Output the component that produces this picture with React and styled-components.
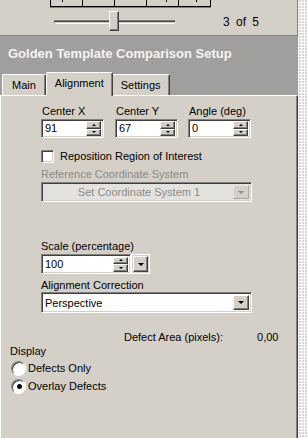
import React from "react";
import styled, { createGlobalStyle, css } from "styled-components";

const GlobalStyle = createGlobalStyle`
  html, body {
    margin: 0;
    padding: 0;
    width: 308px;
    height: 438px;
    overflow: hidden;
    background: #d4d0c8;
  }
  body {
    font-family: "Liberation Sans", Arial, sans-serif;
    font-size: 11px;
    color: #000;
  }
`;

const sunken = css`
  border-style: solid;
  border-width: 1px;
  border-color: #808080 #fff #fff #808080;
  box-shadow: inset 1px 1px 0 #404040, inset -1px -1px 0 #d4d0c8;
`;

const raised = css`
  background: #d4d0c8;
  border-style: solid;
  border-width: 1px;
  border-color: #fff #404040 #404040 #fff;
  box-shadow: inset -1px -1px 0 #808080;
`;

const Screen = styled.div`
  display: flex;
  width: 308px;
  height: 438px;
`;

const Main = styled.div`
  width: 298px;
  display: flex;
  flex-direction: column;
`;

const Dither = styled.div`
  flex: 1;
  border-left: 1px solid #f4f4f4;
  background-color: #fff;
  background-image: conic-gradient(
    from 90deg at 2px 2px,
    #fff 0 50%,
    #d8d6d2 0 75%,
    #fff 0
  );
  background-size: 3px 3px;
`;

const Top = styled.div`
  height: 35px;
  border-right: 1px solid #808080;
  border-bottom: 1px solid #808080;
  display: flex;
  flex-direction: column;
`;

const Strip = styled.div`
  display: flex;
  margin-left: 50px;
  height: 7px;
  border-bottom: 1px solid #808080;
  width: 161px;
`;

const StripCell = styled.div`
  width: 32px;
  border-left: 1px solid #000;
  border-right: ${(p) => (p.last ? "1px solid #000" : "none")};
  border-bottom: 1px solid #000;
  position: relative;
  &::after {
    content: "";
    display: ${(p) => (p.tick ? "block" : "none")};
    position: absolute;
    top: 0;
    left: ${(p) => p.tick}px;
    width: 1px;
    height: 2px;
    background: #000;
  }
`;

const SliderRow = styled.div`
  display: flex;
  align-items: center;
  height: 20px;
  margin-top: 4px;
`;

const Track = styled.div`
  margin-left: 54px;
  width: 120px;
  height: 2px;
  border-top: 1px solid #808080;
  border-bottom: 1px solid #fff;
  border-left: 1px solid #808080;
  box-shadow: inset 0 1px 0 #404040;
  position: relative;
`;

const Thumb = styled.div`
  ${raised};
  position: absolute;
  left: 54px;
  top: -10px;
  width: 8px;
  height: 18px;
`;

const Counter = styled.div`
  margin-left: 48px;
  font-size: 12px;
  word-spacing: 3px;
`;

const Header = styled.div`
  background: #a09f9d;
  height: 59px;
  display: flex;
  flex-direction: column;
  justify-content: space-between;
`;

const Title = styled.div`
  color: #f4f4f4;
  font-weight: bold;
  font-size: 13px;
  padding: 10px 0 0 8px;
`;

const Tabs = styled.div`
  display: flex;
  align-items: flex-end;
  padding-left: 2px;
  height: 24px;
`;

const Tab = styled.div`
  background: #d4d0c8;
  border-style: solid;
  border-width: 1px 1px 0 1px;
  border-color: #fff #404040 #404040 #fff;
  border-radius: 2px 2px 0 0;
  box-shadow: inset -1px 0 0 #808080;
  height: ${(p) => (p.active ? "24px" : "21px")};
  padding: 0 ${(p) => p.pad}px;
  margin: 0 ${(p) => (p.active ? "-1px" : "0")} ${(p) => (p.active ? "-1px" : "0")} 0;
  position: relative;
  z-index: ${(p) => (p.active ? 2 : 1)};
  display: flex;
  align-items: ${(p) => (p.active ? "flex-start" : "center")};
  padding-top: ${(p) => (p.active ? "4px" : "0")};
  box-sizing: border-box;
  color: #000;
`;

const Panel = styled.div`
  flex: 1;
  border-top: 1px solid #fff;
  border-left: 1px solid #fff;
  border-right: 1px solid #404040;
  box-shadow: inset -1px 0 0 #808080;
  display: flex;
  flex-direction: column;
`;

const Form = styled.div`
  padding-left: 40px;
  display: flex;
  flex-direction: column;
`;

const Label = styled.div`
  height: 14px;
  line-height: 14px;
  margin-top: ${(p) => p.mt || 0}px;
  padding-left: ${(p) => p.pl || 0}px;
  color: ${(p) => (p.disabled ? "#8d8a85" : "#000")};
  white-space: nowrap;
`;

const FieldRow = styled.div`
  display: flex;
  margin-top: 8px;
`;

const FieldGroup = styled.div`
  display: flex;
  flex-direction: column;
  width: ${(p) => p.w}px;
  gap: 1px;
  margin-right: ${(p) => p.mr || 0}px;
`;

const SpinBox = styled.div`
  ${sunken};
  background: #fff;
  width: ${(p) => p.w}px;
  height: ${(p) => p.h || 19}px;
  box-sizing: border-box;
  display: flex;
  align-items: center;
  padding: 2px;
`;

const SpinText = styled.div`
  flex: 1;
  padding-left: 1px;
  line-height: 15px;
`;

const SpinButtons = styled.div`
  display: flex;
  flex-direction: column;
  width: 15px;
  height: 15px;
`;

const SpinButton = styled.div`
  ${raised};
  flex: 1;
  box-sizing: border-box;
  display: flex;
  align-items: center;
  justify-content: center;
`;

const Arrow = styled.div`
  width: 0;
  height: 0;
  border-left: ${(p) => p.size}px solid transparent;
  border-right: ${(p) => p.size}px solid transparent;
  ${(p) =>
    p.up
      ? `border-bottom: ${p.size}px solid ${p.color || "#000"};`
      : `border-top: ${p.size}px solid ${p.color || "#000"};`}
`;

const Spin = ({ value, w, h }) => (
  <SpinBox w={w} h={h}>
    <SpinText>{value}</SpinText>
    <SpinButtons>
      <SpinButton>
        <Arrow up size={2} />
      </SpinButton>
      <SpinButton>
        <Arrow size={2} />
      </SpinButton>
    </SpinButtons>
  </SpinBox>
);

const CheckRow = styled.div`
  display: flex;
  align-items: center;
  gap: 6px;
  height: 14px;
  margin-top: 11px;
`;

const CheckBox = styled.div`
  ${sunken};
  background: #fff;
  width: 13px;
  height: 13px;
  box-sizing: border-box;
`;

const Combo = styled.div`
  ${sunken};
  background: ${(p) => (p.disabled ? "#e4e2de" : "#fff")};
  width: 211px;
  height: ${(p) => p.h || 20}px;
  box-sizing: border-box;
  display: flex;
  align-items: center;
  padding: 2px;
  margin-top: ${(p) => p.mt || 0}px;
  color: ${(p) => (p.disabled ? "#8d8a85" : "#000")};
`;

const ComboText = styled.div`
  flex: 1;
  padding-left: 1px;
  text-align: ${(p) => (p.center ? "center" : "left")};
`;

const DropButton = styled.div`
  ${raised};
  width: 16px;
  height: 100%;
  box-sizing: border-box;
  display: flex;
  align-items: center;
  justify-content: center;
  ${(p) =>
    p.disabled &&
    css`
      border-color: #e8e6e2 #a8a6a2 #a8a6a2 #e8e6e2;
      box-shadow: none;
      background: #d4d0c8;
    `}
`;

const ScaleRow = styled.div`
  display: flex;
  align-items: center;
  margin-top: 1px;
  height: 20px;
`;

const SideDrop = styled.div`
  border: 1px solid #fff;
  width: 19px;
  height: 20px;
  box-sizing: border-box;
  padding: 1px;
  display: flex;
`;

const SideDropInner = styled.div`
  ${raised};
  flex: 1;
  display: flex;
  align-items: center;
  justify-content: center;
`;

const DefectRow = styled.div`
  display: flex;
  margin-top: 17px;
  padding-left: 123px;
  height: 14px;
  line-height: 14px;
`;

const DefectValue = styled.div`
  margin-left: 34px;
`;

const Display = styled.div`
  padding-left: 9px;
  display: flex;
  flex-direction: column;
`;

const RadioRow = styled.div`
  display: flex;
  align-items: center;
  gap: 2px;
  height: 18px;
  margin-top: ${(p) => p.mt || 0}px;
`;

const RadioCircle = styled.div`
  width: 13px;
  height: 13px;
  margin-left: 1px;
  border-radius: 50%;
  background: #fff;
  border: 1px solid;
  border-color: #808080 #fff #fff #808080;
  box-shadow: inset 1px 1px 0 #404040;
  display: flex;
  align-items: center;
  justify-content: center;
  &::after {
    content: "";
    display: ${(p) => (p.checked ? "block" : "none")};
    width: 5px;
    height: 5px;
    border-radius: 50%;
    background: #000;
    margin: 1px 0 0 1px;
  }
`;

const Radio = ({ checked, label, mt }) => (
  <RadioRow mt={mt}>
    <RadioCircle checked={checked} />
    <span>{label}</span>
  </RadioRow>
);

export default function App() {
  return (
    <>
      <GlobalStyle />
      <Screen>
        <Main>
          <Top>
            <Strip>
              <StripCell tick={11} />
              <StripCell />
              <StripCell />
              <StripCell tick={19} />
              <StripCell tick={17} last />
            </Strip>
            <SliderRow>
              <Track>
                <Thumb />
              </Track>
              <Counter>3 of 5</Counter>
            </SliderRow>
          </Top>
          <Header>
            <Title>Golden Template Comparison Setup</Title>
            <Tabs>
              <Tab pad={9}>Main</Tab>
              <Tab active pad={8}>
                Alignment
              </Tab>
              <Tab pad={8}>Settings</Tab>
            </Tabs>
          </Header>
          <Panel>
            <Form>
              <FieldRow>
                <FieldGroup w={63} mr={11}>
                  <Label pl={1}>Center X</Label>
                  <Spin value="91" w={63} />
                </FieldGroup>
                <FieldGroup w={63} mr={10}>
                  <Label pl={1}>Center Y</Label>
                  <Spin value="67" w={63} />
                </FieldGroup>
                <FieldGroup w={63}>
                  <Label pl={1}>Angle (deg)</Label>
                  <Spin value="0" w={63} />
                </FieldGroup>
              </FieldRow>
              <CheckRow>
                <CheckBox />
                <span>Reposition Region of Interest</span>
              </CheckRow>
              <Label disabled mt={4}>
                Reference Coordinate System
              </Label>
              <Combo disabled mt={1}>
                <ComboText center>Set Coordinate System 1</ComboText>
                <DropButton disabled>
                  <Arrow size={3} color="#8d8a85" />
                </DropButton>
              </Combo>
              <Label mt={37}>Scale (percentage)</Label>
              <ScaleRow>
                <Spin value="100" w={90} h={20} />
                <SideDrop>
                  <SideDropInner>
                    <Arrow size={3} />
                  </SideDropInner>
                </SideDrop>
              </ScaleRow>
              <Label mt={4}>Alignment Correction</Label>
              <Combo h={21}>
                <ComboText>Perspective</ComboText>
                <DropButton>
                  <Arrow size={3} />
                </DropButton>
              </Combo>
            </Form>
            <DefectRow>
              <span>Defect Area (pixels):</span>
              <DefectValue>0,00</DefectValue>
            </DefectRow>
            <Display>
              <Label>Display</Label>
              <Radio label="Defects Only" mt={1} />
              <Radio label="Overlay Defects" checked />
            </Display>
          </Panel>
        </Main>
        <Dither />
      </Screen>
    </>
  );
}
